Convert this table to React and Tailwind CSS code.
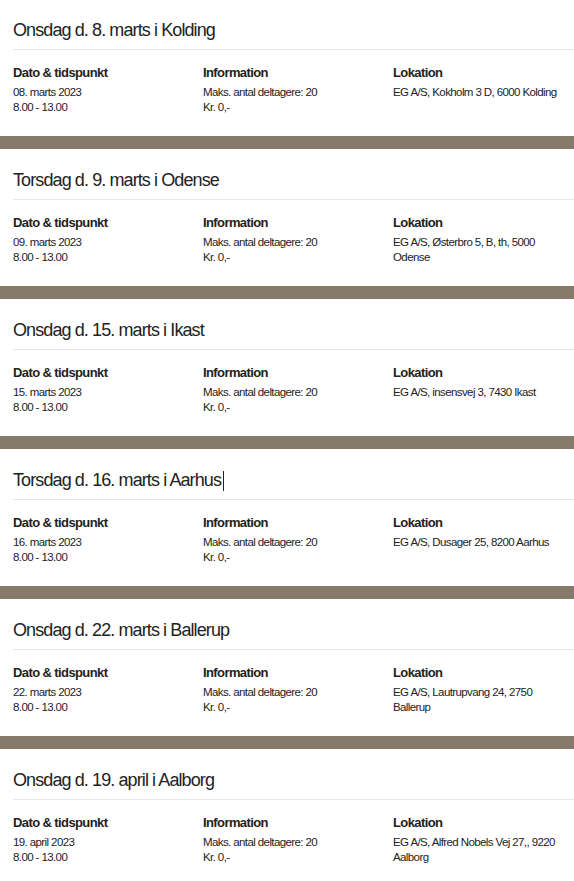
import React from 'react';

const events = [
  {
    title: 'Onsdag d. 8. marts i Kolding',
    date: '08. marts 2023',
    location: ['EG A/S, Kokholm 3 D, 6000 Kolding'],
  },
  {
    title: 'Torsdag d. 9. marts i Odense',
    date: '09. marts 2023',
    location: ['EG A/S, Østerbro 5, B, th, 5000', 'Odense'],
  },
  {
    title: 'Onsdag d. 15. marts i Ikast',
    date: '15. marts 2023',
    location: ['EG A/S, insensvej 3, 7430 Ikast'],
  },
  {
    title: 'Torsdag d. 16. marts i Aarhus',
    date: '16. marts 2023',
    location: ['EG A/S, Dusager 25, 8200 Aarhus'],
    cursor: true,
  },
  {
    title: 'Onsdag d. 22. marts i Ballerup',
    date: '22. marts 2023',
    location: ['EG A/S, Lautrupvang 24, 2750', 'Ballerup'],
  },
  {
    title: 'Onsdag d. 19. april i Aalborg',
    date: '19. april 2023',
    location: ['EG A/S, Alfred Nobels Vej 27,, 9220', 'Aalborg'],
  },
];

const Column = ({ heading, lines }) => (
  <div className="whitespace-nowrap">
    <h3 className="text-[13px] leading-[16px] font-bold tracking-[-0.6px] text-[#222]">{heading}</h3>
    <div className="mt-[4px] text-[11.5px] leading-[15px] tracking-[-0.6px] text-[#222]">
      {lines.map((line, i) => (
        <div key={i}>{line}</div>
      ))}
    </div>
  </div>
);

const EventCard = ({ event }) => (
  <section className="h-[137px] bg-white pl-[13px]">
    <div className="pt-[19px] pb-[7px] border-b border-[#e6e6e6]">
      <h2 className="text-[18px] leading-[24px] tracking-[-0.9px] text-[#222]">
        {event.title}
        {event.cursor && <span className="inline-block ml-[2px] w-px h-[20px] bg-[#222] align-[-5px]" />}
      </h2>
    </div>
    <div className="mt-[15px] grid grid-cols-[190px_190px_175px]">
      <Column heading="Dato & tidspunkt" lines={[event.date, '8.00 - 13.00']} />
      <Column heading="Information" lines={['Maks. antal deltagere: 20', 'Kr. 0,-']} />
      <Column heading="Lokation" lines={event.location} />
    </div>
  </section>
);

const App = () => {
  return (
    <div className="min-h-screen bg-white font-['Liberation_Sans',Arial,sans-serif]">
      <div className="-mt-px">
        {events.map((event, i) => (
          <div key={i}>
            {i > 0 && <div className="h-[13px] bg-[#85796a]" />}
            <EventCard event={event} />
          </div>
        ))}
      </div>
    </div>
  );
};

export default App;
